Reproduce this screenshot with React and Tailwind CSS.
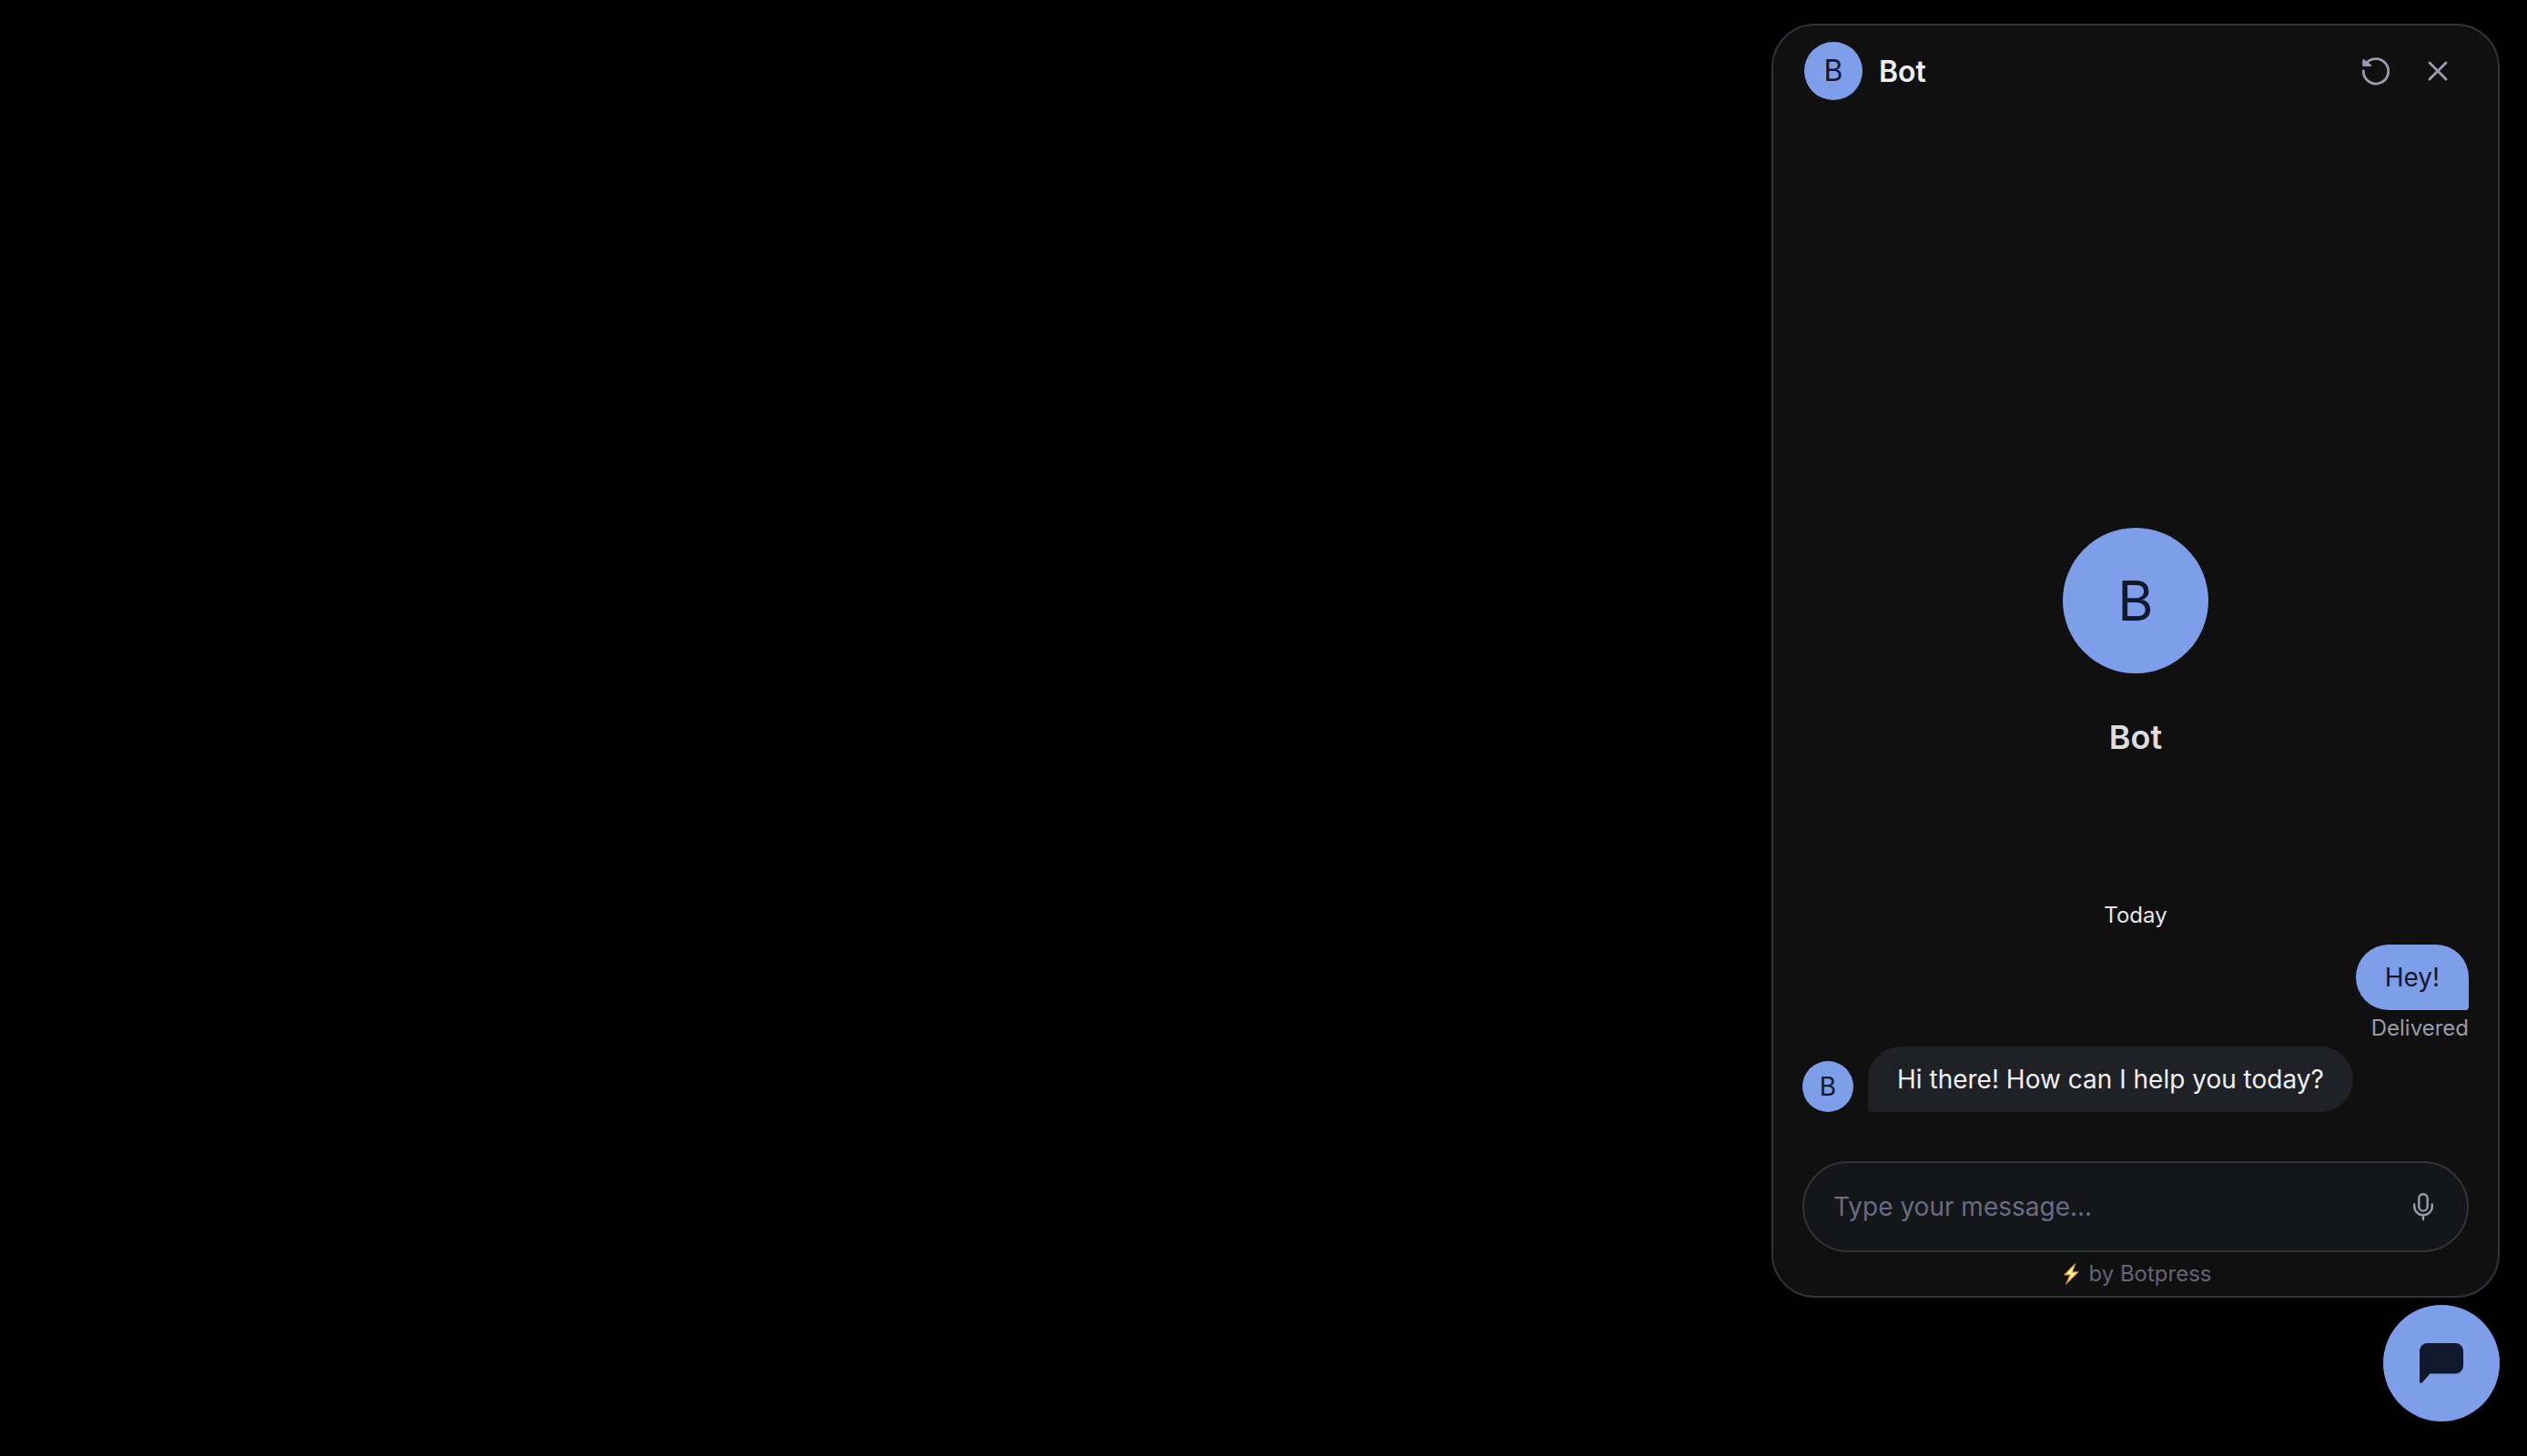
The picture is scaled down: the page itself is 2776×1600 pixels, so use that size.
const iconButton = "flex size-12 items-center justify-center text-[#9b9aad]";

function Avatar({ className }) {
  return (
    <div
      aria-hidden="true"
      className={`flex shrink-0 items-center justify-center rounded-full bg-[#7f9eea] text-[#10182e] ${className}`}
    >
      B
    </div>
  );
}

function RestartIcon() {
  return (
    <svg width="48" height="48" viewBox="0 0 48 48" fill="none" stroke="currentColor" strokeWidth="2.8" strokeLinecap="round" strokeLinejoin="round">
      <path d="M10.3 24A13.7 13.7 0 1 0 12.4 17" />
      <path d="M10.3 12.2V17.8H18Z" fill="currentColor" strokeWidth="2.2" />
    </svg>
  );
}

function CloseIcon() {
  return (
    <svg width="48" height="48" viewBox="0 0 48 48" fill="none" stroke="currentColor" strokeWidth="2.9" strokeLinecap="round">
      <path d="M15 15L33 33M33 15L15 33" />
    </svg>
  );
}

function MicIcon() {
  return (
    <svg width="40" height="40" viewBox="0 0 40 40" fill="none" stroke="currentColor" strokeWidth="2.4" strokeLinecap="round">
      <rect x="15.3" y="6.2" width="9.4" height="18.4" rx="4.7" />
      <path d="M10.2 17.5V19.500A9.8 9.8 0 0 0 29.800 19.500V17.500M20 29.500V34" />
    </svg>
  );
}

function BoltIcon() {
  return (
    <svg width="20" height="26" viewBox="0 0 20 26" aria-hidden="true">
      <path d="M13.800 1.500L1.500 14H8L3.500 24.200L17.200 10.800H10.600Z" fill="#fbd65c" stroke="#c98a2a" strokeWidth="1" strokeLinejoin="round" />
      <path d="M11.500 5.500L5 12.700H10L7 19L13.500 12.200H8.600Z" fill="#fff8c0" />
    </svg>
  );
}

function ChatIcon() {
  return (
    <svg width="48" height="48" viewBox="0 0 48 48" fill="currentColor" aria-hidden="true">
      <path d="M8.500 2H39.500A8.500 8.500 0 0 1 48 10.500V27A8.500 8.500 0 0 1 39.500 35.600H11.500L3 45.300Q0 47 0 44.500V10.500A8.500 8.500 0 0 1 8.500 2Z" />
    </svg>
  );
}

export default function App() {
  return (
    <main className="flex min-h-screen flex-col items-end gap-2 bg-black px-[30px] pt-[26px] pb-[38px] font-['Inter',sans-serif] text-[28px] leading-10 text-[#f0f0f2]">
      <section
        aria-label="Chat with Bot"
        className="flex w-full max-w-[800px] flex-1 flex-col rounded-[48px] border-2 border-[#33323d] bg-[#101010]"
      >
        <header className="flex items-center justify-between py-[18px] pr-[42px] pl-[34px]">
          <div className="flex items-center gap-[18px]">
            <Avatar className="size-16 text-[32px]" />
            <h1 className="pt-0.5 text-[32px] font-semibold">Bot</h1>
          </div>
          <div className="flex gap-5">
            <button type="button" aria-label="Restart conversation" className={iconButton}>
              <RestartIcon />
            </button>
            <button type="button" aria-label="Close chat" className={iconButton}>
              <CloseIcon />
            </button>
          </div>
        </header>

        <div className="flex flex-1 flex-col justify-end px-8 pb-[54px]">
          <div className="flex flex-col items-center gap-[50px] pb-[156px]">
            <Avatar className="size-40 text-[60px]" />
            <h2 className="text-4xl font-semibold text-[#dddce2]">Bot</h2>
          </div>
          <p className="pb-3 text-center text-2xl leading-10 text-[#e6e6e9]">Today</p>
          <div className="flex flex-col items-end">
            <p className="rounded-[36px] rounded-br-[4px] bg-[#7f9eea] px-8 py-4 text-[#10182e]">Hey!</p>
            <p className="text-2xl leading-10 text-[#9b9aab]">Delivered</p>
          </div>
          <div className="flex items-end gap-4">
            <Avatar className="size-14 text-[28px]" />
            <p className="rounded-[36px] rounded-bl-[4px] bg-[#202126] px-8 py-4">
              Hi there! How can I help you today?
            </p>
          </div>
        </div>

        <form className="mx-8 flex items-center rounded-[50px] border-2 border-[#33323d] bg-[#15161a] py-6 pr-7 pl-8">
          <input
            type="text"
            aria-label="Message"
            placeholder="Type your message..."
            className="h-12 min-w-0 flex-1 bg-transparent outline-none placeholder:text-[#6c6b85]"
          />
          <button type="button" aria-label="Record voice message" className="text-[#9b9aad]">
            <MicIcon />
          </button>
        </form>
        <footer className="flex justify-center py-1 pl-1">
          <a href="#botpress" className="flex items-center gap-2 text-2xl leading-10 text-[#646378]">
            <BoltIcon />
            by Botpress
          </a>
        </footer>
      </section>

      <button
        type="button"
        aria-label="Toggle chat"
        className="flex size-32 items-center justify-center rounded-full bg-[#7f9eea] text-[#10182e]"
      >
        <ChatIcon />
      </button>
    </main>
  );
}
